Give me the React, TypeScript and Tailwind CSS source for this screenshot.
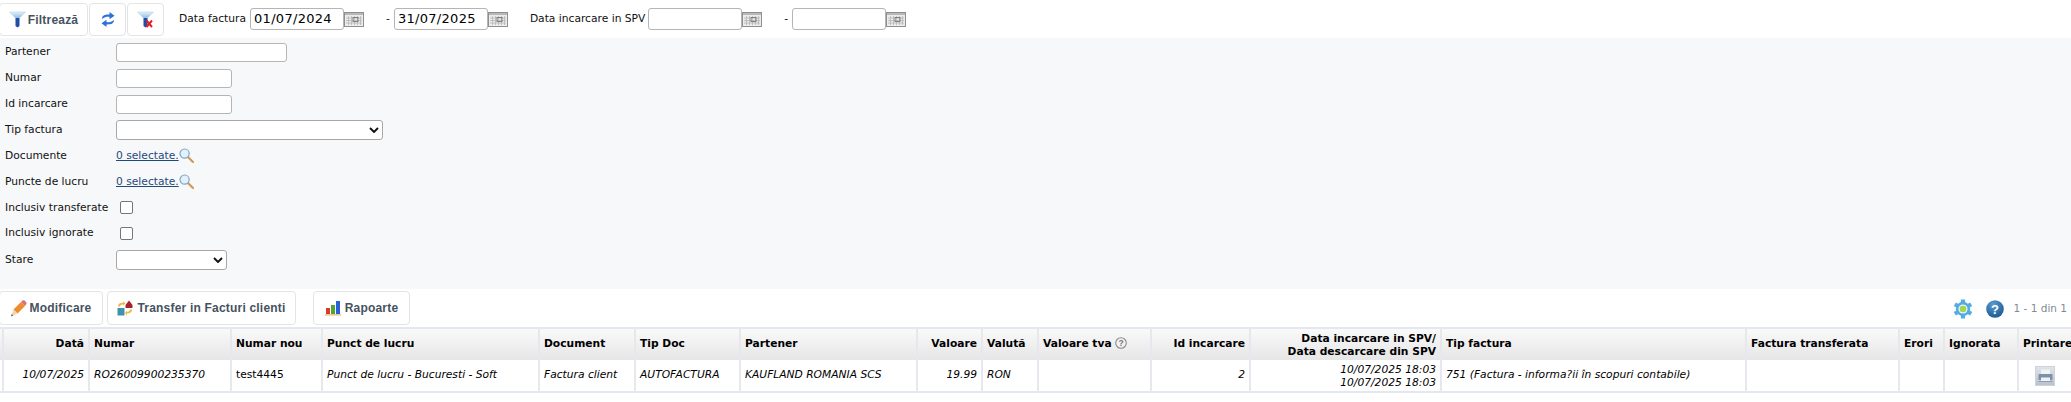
import React from 'react';

const FunnelIcon = ({ clear = false }: { clear?: boolean }) => (
  <svg width="17" height="17" viewBox="0 0 17 17" className="shrink-0">
    <defs>
      <linearGradient id={clear ? 'funA' : 'funB'} x1="0" y1="0" x2="0" y2="1">
        <stop offset="0" stopColor="#e6f2fb" />
        <stop offset="1" stopColor="#8cbbe3" />
      </linearGradient>
    </defs>
    <path d="M0.5 1 H16.5 L10.5 7 H6.5 Z" fill={`url(#${clear ? 'funA' : 'funB'})`} stroke="#a9c8e2" strokeWidth="0.5" />
    <path d="M6.5 7 H10.5 V15 L8.5 16.5 L6.5 15 Z" fill="#1f4da8" />
    {clear && <path d="M9.5 9.5 L15 16 M15 9.5 L9.5 16" stroke="#e02020" strokeWidth="2" />}
  </svg>
);

const RefreshIcon = () => (
  <svg width="14" height="17" viewBox="0 0 14 17">
    <path d="M1 8 C1 4.5 4 3.4 8.5 3.6 V1 L13.5 4.8 L8.5 8.2 V5.8 C5.5 5.6 3.5 6 1 8 Z" fill="#2f6fd8" />
    <path d="M13 9 C13 12.5 10 13.6 5.5 13.4 V16 L0.5 12.2 L5.5 8.8 V11.2 C8.5 11.4 10.5 11 13 9 Z" fill="#2f6fd8" />
  </svg>
);

const CalendarIcon = () => (
  <svg width="20" height="15" viewBox="0 0 20 15" className="shrink-0">
    <rect x="0.5" y="0.5" width="19" height="14" fill="#ececec" stroke="#8f8f8f" />
    <rect x="1" y="1" width="18" height="2" fill="#b8b8b8" />
    <path d="M4.5 4 V13 M7.5 4 V13 M10.5 4 V13 M13.5 4 V13 M16.5 4 V13 M2 6 H18 M2 8.5 H18 M2 11 H18" stroke="#b5b5b5" strokeWidth="0.8" />
    <rect x="9" y="5.5" width="5" height="4" fill="none" stroke="#777" strokeWidth="0.9" />
  </svg>
);

const SearchIcon = () => (
  <svg width="15" height="15" viewBox="0 0 15 15" className="mb-[3px] shrink-0">
    <path d="M9 9 L14 14" stroke="#d29a54" strokeWidth="2.2" strokeLinecap="round" />
    <circle cx="5.6" cy="5.6" r="4.6" fill="#e4f1fa" stroke="#7fa6c4" strokeWidth="1.2" />
  </svg>
);

const PencilIcon = () => (
  <svg width="17" height="17" viewBox="0 0 17 17" className="shrink-0">
    <path d="M3.5 9.5 L11 2 L15 6 L7.5 13.5 Z" fill="#ee8b2e" />
    <path d="M11 2 L12.5 0.6 C13.2 0 14 0 14.6 0.6 L16.2 2.2 C16.8 2.8 16.8 3.6 16.2 4.2 L15 6 Z" fill="#d9707a" />
    <path d="M3.5 9.5 L7.5 13.5 L1 16.5 Z" fill="#eed6b0" />
    <path d="M1 16.5 L1.8 14 L3.2 15.6 Z" fill="#555" />
  </svg>
);

const TransferIcon = () => (
  <svg width="16" height="16" viewBox="0 0 16 16" className="shrink-0">
    <rect x="0.5" y="8" width="7" height="7.5" fill="#3d93ad" />
    <path d="M12 0.5 L15.5 5 V8 H8.5 V5 Z" fill="#a5242a" />
    <path d="M1 6.5 C1 3.8 3 2.8 6 2.8 V1.2 L8.5 3.6 L6 5.6 V4.4 C4.5 4.4 3.2 5 3 6.5 Z" fill="#efb73e" />
    <path d="M15 9.5 C15 12.5 13 13.4 10 13.4 V15.4 L8 13 L10 10.8 V11.8 C11.5 11.8 12.8 11.2 13 9.5 Z" fill="#efb73e" />
  </svg>
);

const ChartIcon = () => (
  <svg width="16" height="16" viewBox="0 0 16 16" className="shrink-0">
    <rect x="1" y="8" width="4" height="6" fill="#d93a2b" />
    <rect x="6" y="5" width="4" height="9" fill="#4ea72e" />
    <rect x="11" y="1" width="4" height="13" fill="#2b60d8" />
    <rect x="0" y="14" width="16" height="1.6" fill="#e8c98a" />
  </svg>
);

const GearIcon = () => (
  <svg width="20" height="20" viewBox="0 0 20 20">
    <g stroke="#55ace4" strokeWidth="4.2">
      <path d="M10 0.5 V19.5 M1.8 5.25 L18.2 14.75 M18.2 5.25 L1.8 14.75" />
    </g>
    <circle cx="10" cy="10" r="7.2" fill="#55ace4" />
    <circle cx="10" cy="10" r="4.6" fill="#e8f4fb" />
    <circle cx="10" cy="10" r="3.3" fill="#a4d64a" />
  </svg>
);

const HelpIcon = () => (
  <svg width="18" height="18" viewBox="0 0 18 18">
    <defs>
      <radialGradient id="helpBg" cx="0.4" cy="0.25" r="0.9">
        <stop offset="0" stopColor="#5b9bd0" />
        <stop offset="1" stopColor="#114f86" />
      </radialGradient>
    </defs>
    <circle cx="9" cy="9" r="8.8" fill="url(#helpBg)" />
    <text x="9" y="13.5" textAnchor="middle" fontSize="13" fontWeight="700" fill="#fff" fontFamily="Liberation Sans, sans-serif">?</text>
  </svg>
);

const TvaHelp = () => (
  <svg width="12" height="12" viewBox="0 0 12 12" className="ml-[3px] inline-block align-[-2px]">
    <circle cx="6" cy="6" r="5.3" fill="#f2f2f2" stroke="#8c8c8c" strokeWidth="1.1" />
    <text x="6" y="9" textAnchor="middle" fontSize="8.5" fontWeight="700" fill="#777" fontFamily="Liberation Sans, sans-serif">?</text>
  </svg>
);

const PrinterIcon = () => (
  <span className="flex h-5 w-5 items-center justify-center border border-[#ccd3da] bg-gradient-to-b from-[#dfe4ea] to-[#b9c3cf]">
    <svg width="15" height="14" viewBox="0 0 15 14">
      <rect x="3" y="0.5" width="9" height="5" fill="#f0f3f6" />
      <rect x="0.5" y="5" width="14" height="6" rx="1" fill="#7e90a6" />
      <rect x="3" y="8.5" width="9" height="3.5" fill="#f0f3f6" />
      <rect x="0.5" y="12" width="14" height="1" fill="#8c9cb0" />
    </svg>
  </span>
);

const ChevronIcon = () => (
  <svg width="10" height="6" viewBox="0 0 10 6" className="shrink-0">
    <path d="M1 1 L5 5 L9 1" fill="none" stroke="#111" strokeWidth="1.9" />
  </svg>
);

const ToolButton = ({ className, children }: { className: string; children: React.ReactNode }) => (
  <button
    type="button"
    className={`flex items-center justify-center rounded-[4px] border border-[#e4e4e4] bg-white font-['Liberation_Sans',sans-serif] text-[12px] font-bold tracking-[0.2px] text-[#46525f] ${className}`}
  >
    {children}
  </button>
);

const DateField = ({ value }: { value?: string }) => (
  <div className="flex items-center">
    <div className="flex h-[22px] w-[94px] items-center rounded-[3px] border border-[#b5b5b5] bg-white pl-[3px] text-[13px] tracking-[0.3px] text-black">
      {value}
    </div>
    <CalendarIcon />
  </div>
);

const FormRow = ({ label, height = 'h-[26px]', children }: { label: string; height?: string; children: React.ReactNode }) => (
  <div className={`flex items-center ${height}`}>
    <label className="w-[116px] shrink-0 pl-[5px] pt-[1px]">{label}</label>
    {children}
  </div>
);

const TextInput = ({ className }: { className: string }) => (
  <div className={`h-[19px] rounded-[3px] border border-[#b5b5b5] bg-white ${className}`} />
);

const SelectBox = ({ className }: { className: string }) => (
  <div className={`flex h-[20px] items-center justify-end rounded-[3px] border border-[#a8a8a8] bg-white pr-[3px] ${className}`}>
    <ChevronIcon />
  </div>
);

const Picker = () => (
  <div className="flex items-center pt-[1px]">
    <a className="text-[#1f4a7a] underline">0 selectate.</a>
    <SearchIcon />
  </div>
);

const CheckBox = () => <div className="ml-[4px] h-[13px] w-[13px] rounded-[2px] border border-[#767676] bg-white" />;

const columns = [3, 86, 142, 91, 217, 96, 105, 177, 65, 56, 113, 99, 191, 305, 153, 45, 74, 53];

export default function App() {
  return (
    <div className="h-[402px] w-[2071px] overflow-hidden bg-white font-['DejaVu_Sans',sans-serif] text-[10.7px] text-[#111]">
      <div className="flex h-[38px] items-start pt-[3px]">
        <ToolButton className="ml-[-1px] h-[33px] w-[89px] gap-[2px]">
          <FunnelIcon />
          Filtrează
        </ToolButton>
        <ToolButton className="ml-[1px] h-[33px] w-[37px]">
          <RefreshIcon />
        </ToolButton>
        <ToolButton className="ml-[1px] h-[33px] w-[37px]">
          <FunnelIcon clear />
        </ToolButton>
        <div className="ml-[15px] mt-[5px] flex items-center">
          <span className="mr-[4px]">Data factura</span>
          <DateField value="01/07/2024" />
          <span className="ml-[22px] mr-[4px]">-</span>
          <DateField value="31/07/2025" />
          <span className="ml-[22px] mr-[3px]">Data incarcare in SPV</span>
          <DateField />
          <span className="ml-[22px] mr-[4px]">-</span>
          <DateField />
        </div>
      </div>

      <div className="h-[251px] bg-[#f7f8fa] pt-[1px]">
        <FormRow label="Partener">
          <TextInput className="w-[171px]" />
        </FormRow>
        <FormRow label="Numar">
          <TextInput className="w-[116px]" />
        </FormRow>
        <FormRow label="Id incarcare">
          <TextInput className="w-[116px]" />
        </FormRow>
        <FormRow label="Tip factura">
          <SelectBox className="w-[267px]" />
        </FormRow>
        <FormRow label="Documente">
          <Picker />
        </FormRow>
        <FormRow label="Puncte de lucru">
          <Picker />
        </FormRow>
        <FormRow label="Inclusiv transferate" height="h-[25px]">
          <CheckBox />
        </FormRow>
        <FormRow label="Inclusiv ignorate">
          <CheckBox />
        </FormRow>
        <FormRow label="Stare" height="h-[27px]">
          <SelectBox className="w-[111px]" />
        </FormRow>
      </div>

      <div className="flex h-[38px] items-start pt-[2px]">
        <ToolButton className="ml-[-1px] h-[34px] w-[104px] gap-[2px]">
          <PencilIcon />
          Modificare
        </ToolButton>
        <ToolButton className="ml-[4px] h-[34px] w-[189px] gap-[4px]">
          <TransferIcon />
          Transfer in Facturi clienti
        </ToolButton>
        <ToolButton className="ml-[17px] h-[34px] w-[97px] gap-[4px]">
          <ChartIcon />
          Rapoarte
        </ToolButton>
        <div className="ml-auto mt-[8px] flex items-center pr-[4px] text-[#7f8a96]">
          <GearIcon />
          <span className="ml-[13px] flex"><HelpIcon /></span>
          <span className="ml-[10px] text-[10.5px]">1 - 1 din 1</span>
        </div>
      </div>

      <table className="w-[2071px] table-fixed border-collapse border-y-2 border-[#e3e7f0] text-black">
        <colgroup>
          {columns.map((width, i) => (
            <col key={i} style={{ width }} />
          ))}
        </colgroup>
        <thead>
          <tr className="h-[32px] bg-gradient-to-b from-[#fafafa] to-[#e6e6e6] font-bold">
            <th className="border-r-2 border-[#e6e8ee]" />
            <th className="border-r-2 border-[#e6e8ee] px-1 text-right">Dată</th>
            <th className="border-r-2 border-[#e6e8ee] px-1 text-left">Numar</th>
            <th className="border-r-2 border-[#e6e8ee] px-1 text-left">Numar nou</th>
            <th className="border-r-2 border-[#e6e8ee] px-1 text-left">Punct de lucru</th>
            <th className="border-r-2 border-[#e6e8ee] px-1 text-left">Document</th>
            <th className="border-r-2 border-[#e6e8ee] px-1 text-left">Tip Doc</th>
            <th className="border-r-2 border-[#e6e8ee] px-1 text-left">Partener</th>
            <th className="border-r-2 border-[#e6e8ee] px-1 text-right">Valoare</th>
            <th className="border-r-2 border-[#e6e8ee] px-1 text-left">Valută</th>
            <th className="whitespace-nowrap border-r-2 border-[#e6e8ee] px-1 text-left">Valoare tva<TvaHelp /></th>
            <th className="border-r-2 border-[#e6e8ee] px-1 text-right">Id incarcare</th>
            <th className="border-r-2 border-[#e6e8ee] px-1 text-right leading-[13px]">Data incarcare in SPV/<br />Data descarcare din SPV</th>
            <th className="border-r-2 border-[#e6e8ee] px-1 text-left">Tip factura</th>
            <th className="border-r-2 border-[#e6e8ee] px-1 text-left">Factura transferata</th>
            <th className="border-r-2 border-[#e6e8ee] px-1 text-left">Erori</th>
            <th className="border-r-2 border-[#e6e8ee] px-1 text-left">Ignorata</th>
            <th className="whitespace-nowrap pl-1 text-left">Printare</th>
          </tr>
        </thead>
        <tbody>
          <tr className="h-[32px] italic">
            <td className="border-r-2 border-[#e6e8ee]" />
            <td className="border-r-2 border-[#e6e8ee] px-1 text-right">10/07/2025</td>
            <td className="border-r-2 border-[#e6e8ee] px-1">RO26009900235370</td>
            <td className="border-r-2 border-[#e6e8ee] px-1 not-italic">test4445</td>
            <td className="border-r-2 border-[#e6e8ee] px-1">Punct de lucru - Bucuresti - Soft</td>
            <td className="border-r-2 border-[#e6e8ee] px-1">Factura client</td>
            <td className="border-r-2 border-[#e6e8ee] px-1">AUTOFACTURA</td>
            <td className="border-r-2 border-[#e6e8ee] px-1">KAUFLAND ROMANIA SCS</td>
            <td className="border-r-2 border-[#e6e8ee] px-1 text-right">19.99</td>
            <td className="border-r-2 border-[#e6e8ee] px-1">RON</td>
            <td className="border-r-2 border-[#e6e8ee] px-1" />
            <td className="border-r-2 border-[#e6e8ee] px-1 text-right">2</td>
            <td className="border-r-2 border-[#e6e8ee] px-1 text-right leading-[13px]">10/07/2025 18:03<br />10/07/2025 18:03</td>
            <td className="whitespace-nowrap border-r-2 border-[#e6e8ee] px-1">751 (Factura - informa?ii în scopuri contabile)</td>
            <td className="border-r-2 border-[#e6e8ee] px-1" />
            <td className="border-r-2 border-[#e6e8ee] px-1" />
            <td className="border-r-2 border-[#e6e8ee] px-1" />
            <td className="px-1">
              <div className="flex justify-center">
                <PrinterIcon />
              </div>
            </td>
          </tr>
        </tbody>
      </table>
    </div>
  );
}
